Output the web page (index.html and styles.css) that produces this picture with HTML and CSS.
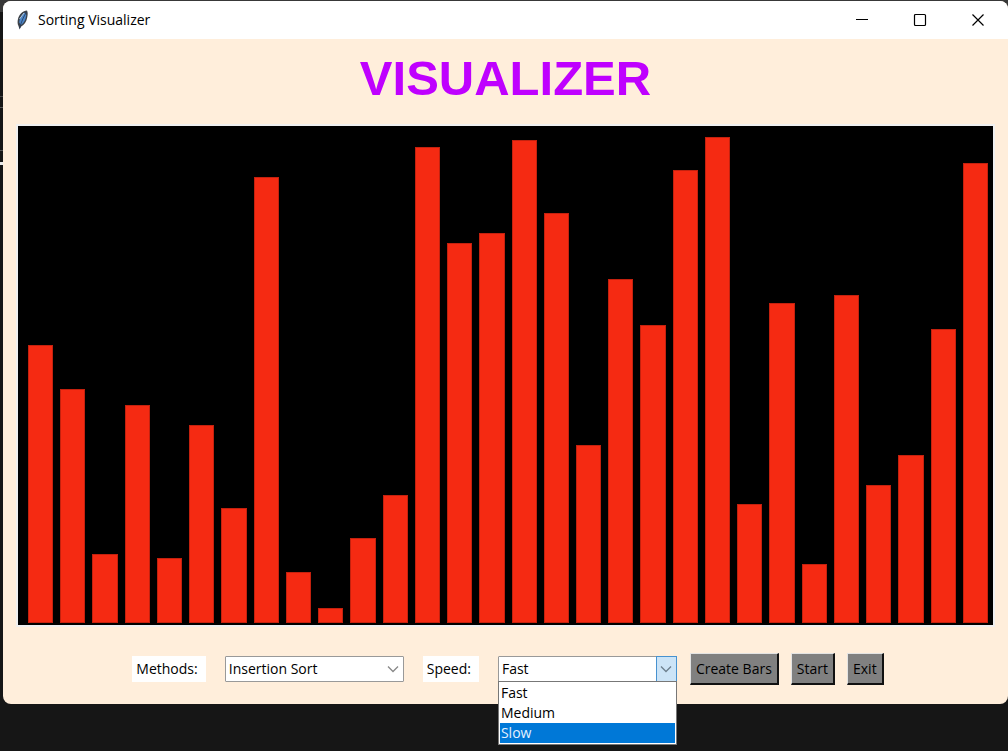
FILE: index.html
```html
<!DOCTYPE html>
<html lang="en">
<head>
<meta charset="utf-8">
<title>Sorting Visualizer</title>
<link rel="stylesheet" href="styles.css">
</head>
<body>
<div class="window">
  <header class="titlebar">
    <svg class="feather" width="14" height="20" viewBox="0 0 14 20" aria-hidden="true">
      <path d="M11 .5C7 1 3 4 2 9c-.6 2.500-.6 5 .5 7L3.500 19.500 5.200 16.500c3-1.500 5.300-5 6-9C11.800 5 12 2 11 .5z" fill="#3c4148"/>
      <path d="M9 2.500C6 4 3.500 8 3.200 12.500L5 15C8 13 9.800 9.500 10.300 5z" fill="#4c86c8"/>
      <path d="M10.500 2C8 6 5.500 11 3.700 18" fill="none" stroke="#23385a" stroke-width=".8"/>
      <path d="M8 3 3.500 9" fill="none" stroke="#b7c8d8"/>
    </svg>
    <span class="title">Sorting Visualizer</span>
    <button class="caption" aria-label="Minimize"><svg width="14" height="14" viewBox="0 0 14 14"><path d="M1 6.500h12" stroke="#000" fill="none"/></svg></button>
    <button class="caption" aria-label="Maximize"><svg width="14" height="14" viewBox="0 0 14 14"><rect x="1.500" y="1.500" width="11" height="11" rx="1" stroke="#000" stroke-width="1.200" fill="none"/></svg></button>
    <button class="caption" aria-label="Close"><svg width="14" height="14" viewBox="0 0 14 14"><path d="M1.500 1.500l11 11M12.500 1.500l-11 11" stroke="#000" stroke-width="1.200" fill="none"/></svg></button>
  </header>
  <main class="content">
    <h1 class="heading">VISUALIZER</h1>
    <div class="chart" role="img" aria-label="Unsorted bars">
      <i class="bar" style="height:278px"></i><i class="bar" style="height:234px"></i><i class="bar" style="height:69px"></i><i class="bar" style="height:218px"></i><i class="bar" style="height:65px"></i><i class="bar" style="height:198px"></i><i class="bar" style="height:115px"></i><i class="bar" style="height:446px"></i><i class="bar" style="height:51px"></i><i class="bar" style="height:15px"></i><i class="bar" style="height:85px"></i><i class="bar" style="height:128px"></i><i class="bar" style="height:476px"></i><i class="bar" style="height:380px"></i><i class="bar" style="height:390px"></i><i class="bar" style="height:483px"></i><i class="bar" style="height:410px"></i><i class="bar" style="height:178px"></i><i class="bar" style="height:344px"></i><i class="bar" style="height:298px"></i><i class="bar" style="height:453px"></i><i class="bar" style="height:486px"></i><i class="bar" style="height:119px"></i><i class="bar" style="height:320px"></i><i class="bar" style="height:59px"></i><i class="bar" style="height:328px"></i><i class="bar" style="height:138px"></i><i class="bar" style="height:168px"></i><i class="bar" style="height:294px"></i><i class="bar" style="height:460px"></i>
    </div>
    <div class="controls">
      <div class="fields">
        <label class="label" for="method">Methods:</label>
        <div class="combo">
          <select class="select" id="method"><option>Insertion Sort</option></select>
          <span class="arrow"><svg width="12" height="8" viewBox="0 0 12 8"><path d="M1 1.500l5 5 5-5" fill="none" stroke="#888" stroke-width="1.300"/></svg></span>
        </div>
        <label class="label" for="speed">Speed:</label>
        <div class="combo">
          <select class="select" id="speed"><option>Fast</option><option>Medium</option><option>Slow</option></select>
          <span class="arrow arrow-active"><svg width="12" height="8" viewBox="0 0 12 8"><path d="M1 1.500l5 5 5-5" fill="none" stroke="#6d7f8e" stroke-width="1.300"/></svg></span>
          <ul class="list" role="listbox" aria-label="Speed">
            <li class="option" role="option">Fast</li>
            <li class="option" role="option">Medium</li>
            <li class="option option-active" role="option" aria-selected="true">Slow</li>
          </ul>
        </div>
      </div>
      <div class="actions">
        <button class="button">Create Bars</button>
        <button class="button">Start</button>
        <button class="button">Exit</button>
      </div>
    </div>
  </main>
</div>
</body>
</html>
```
FILE: styles.css
```css
* { box-sizing: border-box; }
html { min-height: 100%; background: #161616; }
body {
  margin: 0;
  padding: 1px 0 0 3px;
  min-height: 100vh;
  font: 14px/20px "Open Sans", "Noto Sans", sans-serif;
  color: #000;
  background:
    linear-gradient(#e8e8e8, #e8e8e8) 0 162px / 3px 3px no-repeat,
    linear-gradient(#555, #555) 0 150px / 3px 1px no-repeat,
    linear-gradient(#555, #555) 0 107px / 3px 1px no-repeat,
    linear-gradient(#444, #444) 0 96px / 3px 1px no-repeat,
    linear-gradient(#383838, #383838) 0 0 / 100% 12px no-repeat,
    #161616;
}
.window {
  background: #ffeedb;
  border-radius: 8px;
}
.titlebar {
  display: flex;
  align-items: center;
  height: 38px;
  padding-left: 13px;
  background: #fff;
  border-radius: 8px 8px 0 0;
}
.feather { margin-right: 8px; }
.title { flex: 1; }
.caption {
  display: grid;
  place-items: center;
  width: 58px;
  height: 38px;
  padding: 0;
  border: 0;
  background: transparent;
}
.caption:last-child { margin-right: 1px; }
.content { padding: 11px 13px 19px; }
.heading {
  margin: 0 0 17px;
  font: bold 49px/57px "Liberation Sans", Arial, sans-serif;
  text-align: center;
  color: #bf00ff;
}
.chart {
  display: flex;
  align-items: flex-end;
  gap: 7px;
  height: 503px;
  padding: 0 5px 2px 10px;
  border: 2px solid #f0f0f0;
  background: #000;
}
.bar {
  flex: 1;
  background: #f52a12;
  border: 1px solid #c4210e;
}
.controls {
  display: flex;
  justify-content: center;
  gap: 13px;
  margin-top: 26px;
  padding-left: 5px;
}
.fields { display: flex; align-items: center; gap: 19px; }
.actions { display: flex; gap: 12px; }
.label {
  height: 26px;
  padding: 3px 8px 3px 4px;
  background: #fff;
}
.combo { position: relative; width: 179px; }
.select {
  display: block;
  appearance: none;
  width: 100%;
  height: 26px;
  padding: 0 20px 0 3px;
  border: 1px solid #999;
  border-radius: 1px;
  background: #fff;
  color: #000;
  font: inherit;
}
.arrow {
  position: absolute;
  top: 0;
  right: 0;
  display: grid;
  place-items: center;
  width: 21px;
  height: 26px;
  pointer-events: none;
}
.arrow-active { background: #cce4f7; border: 1px solid #4792d0; }
.list {
  position: absolute;
  top: 25px;
  left: 0;
  width: 100%;
  margin: 0;
  padding: 1px;
  list-style: none;
  background: #fff;
  border: 1px solid #777;
}
.option { padding-left: 1px; }
.option-active { background: #0078d7; color: #e4f1ff; }
.button {
  height: 32px;
  padding: 0 5px;
  border: 2px solid;
  border-color: #e3e3e3 #111 #111 #e3e3e3;
  border-width: 1px 2px 2px 1px;
  background: #808080;
  color: #000;
  font: inherit;
}
```
